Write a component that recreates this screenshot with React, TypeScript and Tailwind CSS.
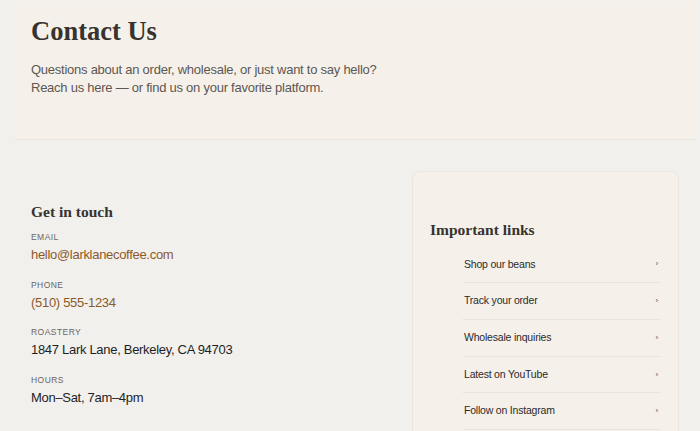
const contacts = [
  { label: 'Email', value: 'hello@larklanecoffee.com', link: true },
  { label: 'Phone', value: '(510) 555-1234', link: true },
  { label: 'Roastery', value: '1847 Lark Lane, Berkeley, CA 94703', link: false },
  { label: 'Hours', value: 'Mon–Sat, 7am–4pm', link: false },
];

const links = ['Shop our beans', 'Track your order', 'Wholesale inquiries', 'Latest on YouTube', 'Follow on Instagram'];

const serif = "font-['Liberation_Serif',Georgia,serif]";

export default function App() {
  return (
    <div className="min-h-[431px] w-full bg-[#f1f0ed] pt-px font-['Liberation_Sans',Arial,sans-serif]">
      <div className="ml-[15px] w-[680px]">
        {/* Header */}
        <header className="h-[139px] border-b border-[#ece5da] bg-[#f5f1ea] px-4 pt-[12.5px]">
          <h1 className={`${serif} text-[26.5px] font-bold leading-[34px] text-[#37332f]`}>Contact Us</h1>
          <p className="mt-[13.5px] text-[13px] leading-[18px] tracking-[-0.25px] text-[#5c5752]">
            Questions about an order, wholesale, or just want to say hello?
            <br />
            Reach us here — or find us on your favorite platform.
          </p>
        </header>

        {/* Body */}
        <div className="mt-[31px] flex justify-between px-4">
          <div className="pt-[31px]">
            <h2 className={`${serif} text-[15.5px] font-bold leading-5 text-[#37332f]`}>Get in touch</h2>
            <dl className="mt-[9px] flex flex-col gap-[14.6px]">
              {contacts.map((c) => (
                <div key={c.label}>
                  <dt className="text-[8.5px] uppercase leading-3 tracking-[0.45px] text-[#6b655f]">{c.label}</dt>
                  <dd
                    className={`mt-[3px] text-[13px] leading-[18px] tracking-[-0.3px] ${
                      c.link ? 'text-[#8b5a2b]' : 'text-[#1f1f1f]'
                    }`}
                  >
                    {c.value}
                  </dd>
                </div>
              ))}
            </dl>
          </div>

          <aside className="h-[280px] w-[267px] rounded-lg border border-[#ece7de] bg-[#f5f1ea] px-[17px] pt-[48px]">
            <h2 className={`${serif} text-[15.5px] font-bold leading-5 text-[#37332f]`}>Important links</h2>
            <ul className="mt-[6.6px] pl-[33px]">
              {links.map((l) => (
                <li
                  key={l}
                  className="flex h-[36.7px] items-center justify-between border-b border-[#e9e3da] pl-px pr-[3px] text-[10.5px] tracking-[-0.2px] text-[#2a2a2a]"
                >
                  <span>{l}</span>
                  <span className="text-[8px] text-[#555]">›</span>
                </li>
              ))}
            </ul>
          </aside>
        </div>
      </div>
    </div>
  );
}
